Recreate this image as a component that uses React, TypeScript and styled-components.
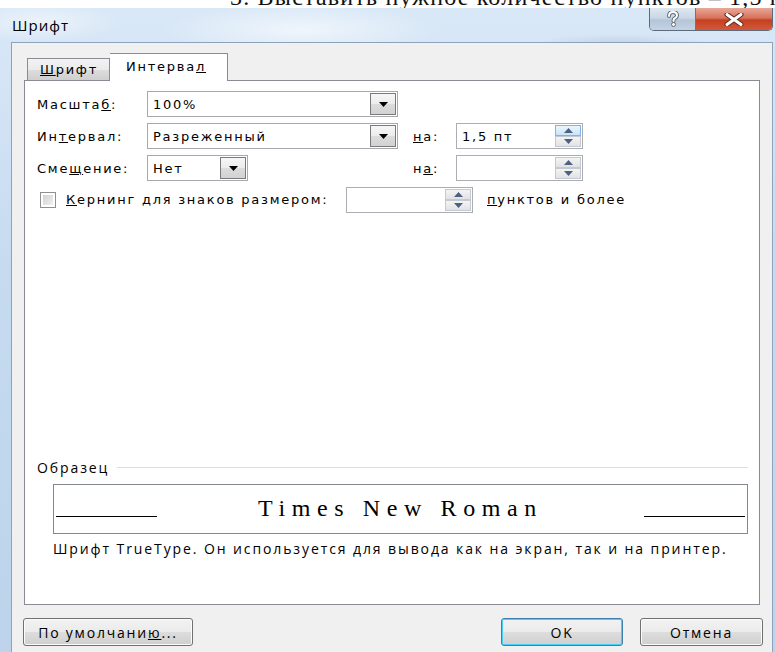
import React from 'react'
import styled, { createGlobalStyle } from 'styled-components'

const UI = `"DejaVu Sans", Verdana, sans-serif`
const SEGOE = `"Open Sans", "Noto Sans", sans-serif`

const GlobalStyle = createGlobalStyle`
  html, body {
    margin: 0;
    padding: 0;
    background: #ffffff;
  }
  body {
    width: 775px;
    height: 652px;
    overflow: hidden;
  }
`

// little pieces

function Arrow() {
  return (
    <svg width="9" height="5" viewBox="0 0 9 5">
      <path d="M0 0 H9 L4.5 5 Z" fill="#000" />
    </svg>
  )
}

function SpinArrow({ up }: { up?: boolean }) {
  return (
    <svg width="9" height="5" viewBox="0 0 9 5">
      <path d={up ? 'M0 5 H9 L4.5 0 Z' : 'M0 0 H9 L4.5 5 Z'} fill="#4d6185" />
    </svg>
  )
}

function ComboBox({ value, width }: { value: string; width: number }) {
  return (
    <Style.Combo $width={width}>
      <Style.ComboText>{value}</Style.ComboText>
      <Style.DropButton>
        <Arrow />
      </Style.DropButton>
    </Style.Combo>
  )
}

function SpinBox({ value, hot }: { value?: string; hot?: boolean }) {
  return (
    <Style.Spin>
      <Style.ComboText>{value}</Style.ComboText>
      <Style.SpinButtons>
        <Style.SpinHalf $hot={hot}>
          <SpinArrow up />
        </Style.SpinHalf>
        <Style.SpinHalf>
          <SpinArrow />
        </Style.SpinHalf>
      </Style.SpinButtons>
    </Style.Spin>
  )
}

// text with one underlined access key
function Key({ pre, k, post }: { pre?: string; k: string; post?: string }) {
  return (
    <>
      {pre}
      <u>{k}</u>
      {post}
    </>
  )
}

export default function App(): JSX.Element {
  return (
    <Style.Page>
      <GlobalStyle />
      <Style.DocStrip>
        <Style.DocLine>3. Выставить нужное количество пунктов – 1,5 пт</Style.DocLine>
      </Style.DocStrip>

      <Style.Window>
        <Style.TitleBar>
          <Style.Title>Шрифт</Style.Title>
          <Style.CaptionButtons>
            <Style.HelpButton>
              <svg width="14" height="16" viewBox="0 0 14 16">
                <path
                  d="M3 5 C3 2 5 1 7 1 C9.5 1 11 2.5 11 4.5 C11 6.5 9 7 8 8 C7.5 8.5 7.5 9 7.5 10"
                  fill="none"
                  stroke="#5f6b78"
                  strokeWidth="4"
                  strokeLinecap="round"
                />
                <path
                  d="M3 5 C3 2 5 1 7 1 C9.5 1 11 2.5 11 4.5 C11 6.5 9 7 8 8 C7.5 8.5 7.5 9 7.5 10"
                  fill="none"
                  stroke="#ffffff"
                  strokeWidth="2"
                  strokeLinecap="round"
                />
                <circle cx="7.5" cy="13.5" r="2" fill="#ffffff" stroke="#5f6b78" strokeWidth="1" />
              </svg>
            </Style.HelpButton>
            <Style.CloseButton>
              <svg width="20" height="13" viewBox="0 0 20 13">
                <path d="M3 1.5 L17 11.5 M17 1.5 L3 11.5" stroke="#5a2a22" strokeWidth="5" strokeLinecap="round" />
                <path d="M3 1.5 L17 11.5 M17 1.5 L3 11.5" stroke="#ffffff" strokeWidth="3" strokeLinecap="round" />
              </svg>
            </Style.CloseButton>
          </Style.CaptionButtons>
        </Style.TitleBar>

        <Style.Client>
          <Style.Tabs>
            <Style.Tab>
              <Key k="Ш" post="рифт" />
            </Style.Tab>
            <Style.Tab $active>
              <Key pre="Интерва" k="л" />
            </Style.Tab>
          </Style.Tabs>

          <Style.Panel>
            <Style.Form>
              <Style.Label>
                <Key pre="Масшта" k="б" post=":" />
              </Style.Label>
              <ComboBox value="100%" width={251} />
              <span />
              <span />

              <Style.Label>
                <Key pre="Ин" k="т" post="ервал:" />
              </Style.Label>
              <ComboBox value="Разреженный" width={251} />
              <Style.Label>
                <Key k="н" post="а:" />
              </Style.Label>
              <SpinBox value="1,5 пт" hot />

              <Style.Label>
                <Key pre="Сме" k="щ" post="ение:" />
              </Style.Label>
              <ComboBox value="Нет" width={101} />
              <Style.Label>
                <Key pre="н" k="а" post=":" />
              </Style.Label>
              <SpinBox />
            </Style.Form>

            <Style.KernRow>
              <Style.Check />
              <Style.KernLabel>
                <Key k="К" post="ернинг для знаков размером:" />
              </Style.KernLabel>
              <SpinBox />
              <Style.KernUnit>
                <Key k="п" post="унктов и более" />
              </Style.KernUnit>
            </Style.KernRow>

            <Style.Sample>
              <Style.SampleHeader>
                <span>Образец</span>
                <Style.HeaderRule />
              </Style.SampleHeader>
              <Style.SampleBox>
                <Style.SampleRule />
                <Style.SampleText>Times New Roman</Style.SampleText>
                <Style.SampleRule />
              </Style.SampleBox>
              <Style.SampleNote>
                Шрифт TrueType. Он используется для вывода как на экран, так и на принтер.
              </Style.SampleNote>
            </Style.Sample>
          </Style.Panel>

          <Style.Footer>
            <Style.Button $width={170}>
              <Key pre="По умолчани" k="ю" post="..." />
            </Style.Button>
            <Style.Button $width={122} $default>
              OK
            </Style.Button>
            <Style.Button $width={123}>Отмена</Style.Button>
          </Style.Footer>
        </Style.Client>
      </Style.Window>
    </Style.Page>
  )
}

const Style = {
  Page: styled.div`
    width: 775px;
    height: 652px;
    display: flex;
    flex-direction: column;
    overflow: hidden;
    background: #ffffff;
  `,
  DocStrip: styled.div`
    height: 8px;
    overflow: hidden;
    padding-left: 230px;
  `,
  DocLine: styled.div`
    margin-top: -15px;
    font-family: "Liberation Serif", "Times New Roman", serif;
    font-size: 24px;
    line-height: 24px;
    letter-spacing: 1.2px;
    white-space: nowrap;
    color: #111;
  `,
  Window: styled.div`
    flex: 1;
    display: flex;
    flex-direction: column;
    background:
      radial-gradient(ellipse 140px 26px at 300px 22px, rgba(255, 255, 255, 0.6), transparent),
      radial-gradient(ellipse 80px 20px at 40px 14px, rgba(255, 255, 255, 0.5), transparent),
      radial-gradient(ellipse 90px 12px at 620px 38px, rgba(120, 150, 180, 0.3), transparent),
      linear-gradient(180deg, #d9e8f7 0%, #c6dbf0 40%, #bcd3eb 100%);
  `,
  TitleBar: styled.div`
    height: 34px;
    display: flex;
    align-items: flex-start;
    justify-content: space-between;
    padding-left: 12px;
  `,
  Title: styled.div`
    font-family: ${SEGOE};
    font-size: 15px;
    line-height: 34px;
    letter-spacing: 1px;
    color: #000;
  `,
  CaptionButtons: styled.div`
    display: flex;
    height: 22px;
    margin-right: 2px;
    border: 1px solid #5d6a7c;
    border-top: none;
    border-radius: 0 0 5px 5px;
    overflow: hidden;
  `,
  HelpButton: styled.div`
    width: 45px;
    display: flex;
    align-items: center;
    justify-content: center;
    border-right: 1px solid #6a7585;
    background: linear-gradient(180deg, #dfe7f0 0%, #cad7e6 45%, #b5c5d8 55%, #c4d3e4 100%);
  `,
  CloseButton: styled.div`
    width: 76px;
    display: flex;
    align-items: center;
    justify-content: center;
    background: linear-gradient(180deg, #e8a897 0%, #d8735e 45%, #c4401f 55%, #d4583a 100%);
  `,
  Client: styled.div`
    flex: 1;
    margin: 0 2px 0 11px;
    padding: 10px 12px 0 12px;
    border: 1px solid #8ea3ba;
    border-bottom: none;
    background: #f0f0f0;
    display: flex;
    flex-direction: column;
  `,
  Tabs: styled.div`
    display: flex;
    align-items: flex-end;
    height: 28px;
    margin: 0 0 -1px 3px;
    position: relative;
    z-index: 1;
  `,
  Tab: styled.div<{ $active?: boolean }>`
    box-sizing: border-box;
    height: ${({ $active }) => ($active ? '28px' : '23px')};
    width: ${({ $active }) => ($active ? '118px' : '83px')};
    padding-left: ${({ $active }) => ($active ? '16px' : '12px')};
    padding-bottom: ${({ $active }) => ($active ? '3px' : '0')};
    display: flex;
    align-items: center;
    border: 1px solid #898c95;
    border-bottom: ${({ $active }) => ($active ? 'none' : '1px solid #898c95')};
    border-left: ${({ $active }) => ($active ? 'none' : '1px solid #898c95')};
    background: ${({ $active }) =>
      $active ? '#ffffff' : 'linear-gradient(180deg, #f2f2f2 0%, #ebebeb 50%, #dddddd 51%, #cfcfcf 100%)'};
    font-family: ${UI};
    font-size: 13px;
    letter-spacing: 1.75px;
    color: #000;
  `,
  Panel: styled.div`
    box-sizing: border-box;
    height: 525px;
    background: #ffffff;
    border: 1px solid #898c95;
    display: flex;
    flex-direction: column;
    padding: 10px 0 0 12px;
    font-family: ${UI};
    font-size: 13px;
    letter-spacing: 1.75px;
    color: #000;
  `,
  Form: styled.div`
    display: grid;
    grid-template-columns: 110px 251px 58px 127px;
    grid-auto-rows: 26px;
    row-gap: 6px;
    align-items: center;
    & > :nth-child(4n + 3) {
      padding-left: 15px;
    }
  `,
  Label: styled.span`
    white-space: nowrap;
  `,
  Combo: styled.div<{ $width: number }>`
    box-sizing: border-box;
    width: ${({ $width }) => $width}px;
    height: 26px;
    display: flex;
    align-items: stretch;
    border: 1px solid #a7a9ae;
    background: #ffffff;
    padding: 1px;
  `,
  ComboText: styled.div`
    flex: 1;
    display: flex;
    align-items: center;
    padding-left: 4px;
    white-space: nowrap;
  `,
  DropButton: styled.div`
    box-sizing: border-box;
    width: 26px;
    display: flex;
    align-items: center;
    justify-content: center;
    border: 1px solid #7a7a7a;
    background: linear-gradient(180deg, #f6f6f6 0%, #ececec 50%, #dcdcdc 51%, #d2d2d2 100%);
  `,
  Spin: styled.div`
    box-sizing: border-box;
    width: 127px;
    height: 26px;
    display: flex;
    align-items: stretch;
    border: 1px solid #abadb3;
    background: #ffffff;
    padding: 1px;
  `,
  SpinButtons: styled.div`
    width: 26px;
    display: flex;
    flex-direction: column;
  `,
  SpinHalf: styled.div<{ $hot?: boolean }>`
    flex: 1;
    display: flex;
    align-items: center;
    justify-content: center;
    box-sizing: border-box;
    border: 1px solid ${({ $hot }) => ($hot ? '#7eb4ea' : '#c3cad4')};
    background: ${({ $hot }) =>
      $hot ? 'linear-gradient(180deg, #eaf6fd 0%, #c6e5f9 100%)' : 'linear-gradient(180deg, #f4f4f4 0%, #e2e2e2 100%)'};
  `,
  KernRow: styled.div`
    display: flex;
    align-items: center;
    height: 25px;
    margin-top: 6px;
    padding-left: 3px;
  `,
  Check: styled.div`
    box-sizing: border-box;
    width: 16px;
    height: 16px;
    border: 1px solid #8e8f8f;
    padding: 2px;
    background-image: linear-gradient(135deg, #cbcbcb, #f6f6f6);
    background-clip: content-box;
  `,
  KernLabel: styled.span`
    box-sizing: border-box;
    width: 290px;
    padding-left: 10px;
    white-space: nowrap;
  `,
  KernUnit: styled.span`
    margin-left: 14px;
    white-space: nowrap;
  `,
  Sample: styled.div`
    margin-top: auto;
    padding: 0 11px 47px 0;
    display: flex;
    flex-direction: column;
    font-family: ${SEGOE};
    font-size: 14px;
    letter-spacing: 1.9px;
  `,
  SampleHeader: styled.div`
    display: flex;
    align-items: center;
    gap: 8px;
    height: 16px;
  `,
  HeaderRule: styled.div`
    flex: 1;
    height: 1px;
    background: #d5dfe5;
  `,
  SampleBox: styled.div`
    box-sizing: border-box;
    height: 50px;
    margin: 9px 0 0 16px;
    border: 1px solid #828790;
    display: flex;
    align-items: flex-start;
    padding: 0 2px;
  `,
  SampleRule: styled.div`
    width: 101px;
    margin-top: 31px;
    border-bottom: 1px solid #000;
  `,
  SampleText: styled.div`
    flex: 1;
    text-align: center;
    font-family: "Liberation Serif", "Times New Roman", serif;
    font-size: 24px;
    line-height: 46px;
    letter-spacing: 6.6px;
    color: #000;
  `,
  SampleNote: styled.div`
    margin: 7px 0 0 16px;
    line-height: 16px;
    white-space: nowrap;
  `,
  Footer: styled.div`
    display: flex;
    gap: 17px;
    padding-top: 13px;
    margin: 0 -3px 0 -1px;
    & > :nth-child(2) {
      margin-left: auto;
    }
  `,
  Button: styled.div<{ $width: number; $default?: boolean }>`
    box-sizing: border-box;
    width: ${({ $width }) => $width}px;
    height: 28px;
    display: flex;
    align-items: center;
    justify-content: center;
    border: 1px solid ${({ $default }) => ($default ? '#3c7fb1' : '#707070')};
    border-radius: 3px;
    box-shadow: inset 0 0 0 1px ${({ $default }) => ($default ? '#48d0fa' : '#fbfbfb')};
    background: linear-gradient(180deg, #f2f2f2 0%, #ebebeb 50%, #dddddd 51%, #cfcfcf 100%);
    font-family: ${SEGOE};
    font-size: 14px;
    letter-spacing: 1.8px;
    color: #000;
  `,
}
